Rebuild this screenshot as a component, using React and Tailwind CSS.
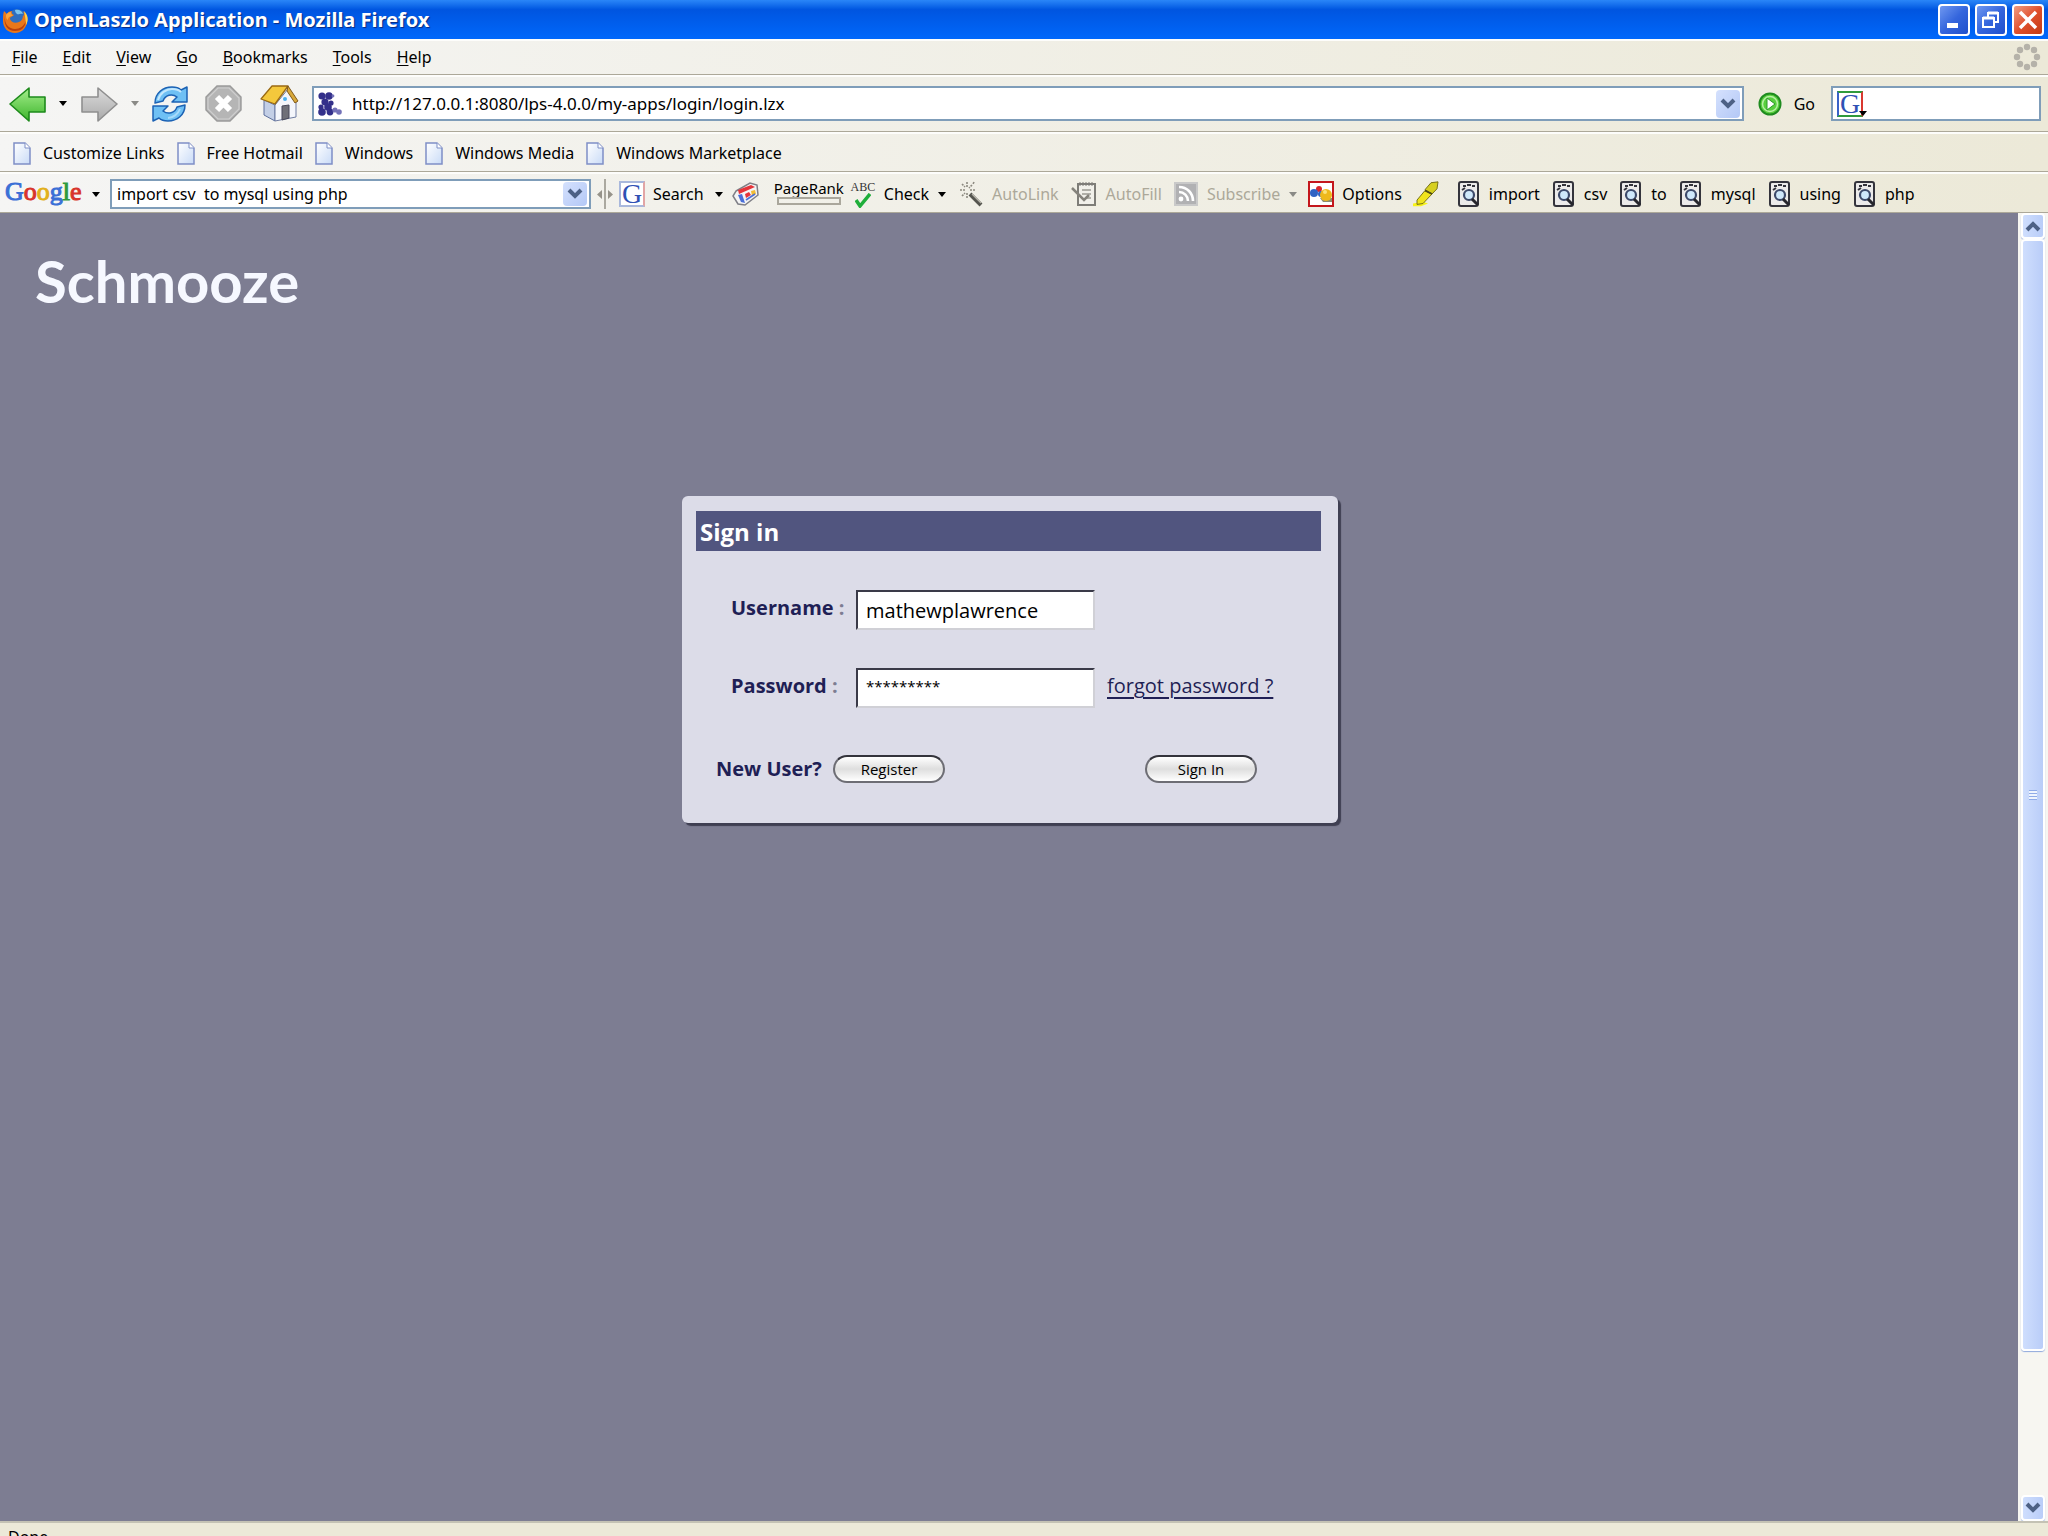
import { useState } from 'react';

const menus = ['File', 'Edit', 'View', 'Go', 'Bookmarks', 'Tools', 'Help'];
const bookmarks = ['Customize Links', 'Free Hotmail', 'Windows', 'Windows Media', 'Windows Marketplace'];
const searchWords = ['import', 'csv', 'to', 'mysql', 'using', 'php'];

const barLine = 'border-b border-[#aca899] shadow-[inset_0_2px_0_#fdfdfb]';

// Small black triangle next to drop-down buttons
const Caret = ({ className = 'text-black' }) => (
    <svg className={`w-2 h-[5px] shrink-0 ${className}`} viewBox="0 0 8 5">
        <path d="M0 0h8L4 5z" fill="currentColor" />
    </svg>
);

const Chevron = ({ up = false }) => (
    <svg className="w-4 h-3" viewBox="0 0 16 12">
        <path d={up ? 'M2 10l6-6 6 6' : 'M2 2l6 6 6-6'} fill="none" stroke="#4d6185" strokeWidth="4" />
    </svg>
);

const FirefoxIcon = () => (
    <svg className="w-7 h-7 shrink-0" viewBox="0 0 28 28">
        <circle cx="15" cy="12" r="9" fill="#2f6fc0" />
        <path d="M13 4c4-1 7 1 8 4-3-1-4 1-6 0-1-1-2-2-2-4z" fill="#7cc4ee" />
        <path d="M2 5l3 3c1-2 3-3 5-3-1 2 0 3 2 4-1 2-4 1-4 4 1 3 5 5 9 3 3-1 4-4 4-7l1 1c0-2 0-3-1-5 4 3 5 7 4 11-1 7-6 11-12 11C6 27 1 22 1 15c0-4 0-7 1-10z" fill="#e8771a" />
        <path d="M3 10c-1 8 4 13 10 13 5 0 9-3 11-8-1 7-5 10-11 10C6 25 1 19 3 10z" fill="#b8400e" />
        <path d="M22 5c4 4 5 9 2 14 0-4-1-9-2-14z" fill="#ffd04a" />
        <path d="M4 9c1-2 3-3 5-3 0 2 1 3 2 4-3 0-5 1-5 4-2-1-2-3-2-5z" fill="#f9a33b" />
    </svg>
);

const ArrowIcon = ({ forward = false }) => (
    <svg className="w-[37px] h-9 shrink-0" viewBox="0 0 37 36">
        <defs>
            <linearGradient id={forward ? 'fwd' : 'back'} x1="0" y1="0" x2="0" y2="1">
                <stop offset="0" stopColor={forward ? '#dcdcdc' : '#a5ee8c'} />
                <stop offset="1" stopColor={forward ? '#a9a9a9' : '#3db52c'} />
            </linearGradient>
        </defs>
        <path
            d={forward ? 'M36 18L17 2v9H1v15h16v9z' : 'M1 18L20 2v9h16v15H20v9z'}
            fill={forward ? 'url(#fwd)' : 'url(#back)'}
            stroke={forward ? '#8f8f8f' : '#1d8a1b'}
            strokeWidth="1.6"
            strokeLinejoin="round"
        />
    </svg>
);

const ReloadIcon = () => (
    <svg className="w-[38px] h-9 shrink-0" viewBox="0 0 38 36">
        <g fill="#6fc0f4" stroke="#1c62b4" strokeWidth="1.5" strokeLinejoin="round">
            <path d="M4 17C4 7 12 1 21 1c4 0 7 1 9 3l6-3v15H21l5-5c-5-4-12-2-14 4z" />
            <path d="M34 19c0 10-8 16-17 16-4 0-7-1-9-3l-6 3V20h15l-5 5c5 4 12 2 14-4z" />
        </g>
        <path d="M7 14c2-7 8-11 14-11 4 0 7 1 9 3" fill="none" stroke="#c3e7fd" strokeWidth="2" />
        <path d="M29 23c-2 5-7 9-12 9" fill="none" stroke="#a7dafb" strokeWidth="2" />
    </svg>
);

const StopIcon = () => (
    <svg className="w-[37px] h-[37px] shrink-0" viewBox="0 0 37 37">
        <path d="M12 1h13l11 11v13L25 36H12L1 25V12z" fill="#b5b5b5" stroke="#9a9a9a" strokeWidth="1.4" />
        <path d="M13 3h11l10 10v11L24 34H13L3 24V13z" fill="none" stroke="#cfcfcf" strokeWidth="1.2" />
        <path d="M12 12l13 13M25 12L12 25" stroke="#fff" strokeWidth="6" />
    </svg>
);

const HomeIcon = () => (
    <svg className="w-[39px] h-[37px] shrink-0" viewBox="0 0 39 37">
        <path d="M4 15l11 5v16L4 30z" fill="#c3cfe6" stroke="#5c6f9c" />
        <path d="M15 20L28 4l8 13v15l-21 4z" fill="#f4f6fb" stroke="#6f7da2" />
        <path d="M12 1h16L15 19 1 14z" fill="#f4c83c" stroke="#9a6a13" strokeWidth="1.3" strokeLinejoin="round" />
        <path d="M28 1l10 15-3 2L27 6z" fill="#d8a93a" stroke="#80591a" />
        <path d="M22 21l7-1v13l-7 2z" fill="#6f7078" stroke="#48495a" />
        <circle cx="25" cy="14" r="2" fill="#4ab0ee" />
    </svg>
);

const LaszloIcon = () => (
    <svg className="w-6 h-6 shrink-0" viewBox="0 0 24 24">
        <g fill="#33308a">
            <circle cx="4" cy="4" r="3.6" /><circle cx="11" cy="4" r="3.8" />
            <circle cx="13" cy="11" r="2.6" /><circle cx="7" cy="10" r="3.6" />
            <circle cx="3" cy="15" r="2.6" /><circle cx="10" cy="15" r="3.8" />
            <circle cx="4" cy="20" r="3.8" /><circle cx="12" cy="20" r="3.4" />
        </g>
        <g fill="#7472b8">
            <circle cx="17" cy="18" r="2.6" /><circle cx="21" cy="20" r="2.8" /><circle cx="15" cy="4" r="1.4" />
        </g>
    </svg>
);

const PageIcon = () => (
    <svg className="w-[18px] h-[23px] shrink-0" viewBox="0 0 18 23">
        <defs>
            <linearGradient id="sheet" x1="0" y1="0" x2="1" y2="1">
                <stop offset="0" stopColor="#ffffff" />
                <stop offset="1" stopColor="#c9dbf7" />
            </linearGradient>
        </defs>
        <path d="M1 1h11l5 5v16H1z" fill="url(#sheet)" stroke="#7f8fc6" strokeWidth="1.5" />
        <path d="M12 1v5h5" fill="#fff" stroke="#7f8fc6" />
    </svg>
);

const GoIcon = () => (
    <svg className="w-6 h-6 shrink-0" viewBox="0 0 24 24">
        <circle cx="12" cy="12" r="10.5" fill="#58cf3d" stroke="#1f8b1f" strokeWidth="2" />
        <circle cx="12" cy="12" r="7.5" fill="none" stroke="#b9f0a6" strokeWidth="1.5" />
        <path d="M9 6l8 6-8 6z" fill="#fff" stroke="#2b9a26" />
    </svg>
);

const SpinnerIcon = () => (
    <svg className="w-7 h-7 shrink-0" viewBox="0 0 28 28">
        <g fill="#b5b2a9">
            <circle cx="14" cy="4" r="3.2" /><circle cx="21" cy="7" r="3.2" />
            <circle cx="24" cy="14" r="3.2" /><circle cx="21" cy="21" r="3.2" />
            <circle cx="14" cy="24" r="3.2" /><circle cx="7" cy="21" r="3.2" />
            <circle cx="4" cy="14" r="3.2" /><circle cx="7" cy="7" r="3.2" />
        </g>
    </svg>
);

const GoogleG = ({ className = 'border-t-[#2f9a3c] border-l-[#3a62c8] border-b-[#2f9a3c] border-r-[#d9382f]' }) => (
    <span className={`flex w-[26px] h-[26px] shrink-0 items-center justify-center border-2 bg-white font-['Liberation_Serif',serif] text-[28px] leading-none text-[#2f51b4] ${className}`}>
        G
    </span>
);

const SplitterIcon = () => (
    <svg className="w-4 h-[30px] shrink-0" viewBox="0 0 16 30">
        <path d="M8 0v30" stroke="#8d8a80" strokeWidth="1.4" />
        <path d="M5 11v9l-5-4.500zM11 11v9l5-4.500z" fill="#96938a" />
    </svg>
);

const NewsIcon = () => (
    <svg className="w-[27px] h-6 shrink-0" viewBox="0 0 27 24">
        <path d="M4 9l14-8 7 2 1 10-13 10-7-1-5-8z" fill="#f4f4f4" stroke="#7f7f86" strokeWidth="1.5" />
        <path d="M6 8l13-5 4 2-16 7z" fill="#e5343a" />
        <path d="M6 13l4-1 3 9-4-1z" fill="#4a6fd8" />
        <path d="M13 12l4-2 2 3-5 3z" fill="#e5343a" />
        <path d="M19 9l4-1 1 4-4 2z" fill="#f2bc34" />
        <path d="M14 18l9-6" stroke="#4a6fd8" strokeWidth="1.6" />
    </svg>
);

const CheckIcon = () => (
    <span className="flex w-6 shrink-0 flex-col items-center">
        <span className="font-['Liberation_Serif',serif] text-xs leading-3 text-[#333]">ABC</span>
        <svg className="w-4 h-[15px]" viewBox="0 0 16 15">
            <path d="M1 7l4 6L15 1" fill="none" stroke="#1fae3a" strokeWidth="3.500" />
        </svg>
    </span>
);

const WandIcon = () => (
    <svg className="w-6 h-[26px] shrink-0" viewBox="0 0 24 26">
        <path d="M11 13l11 11" stroke="#55554f" strokeWidth="4" />
        <path d="M13 13l9 9" stroke="#b8b6ac" strokeWidth="1.2" />
        <path d="M8 1v5M8 12v5M1 9h5M11 9h5M3 3l3 3M13 4l-3 3M3 15l3-3M15 1l-1 2" stroke="#8d8a80" strokeWidth="1.600" strokeDasharray="2 1" />
    </svg>
);

const AutoFillIcon = () => (
    <svg className="w-[26px] h-[26px] shrink-0" viewBox="0 0 26 26">
        <path d="M7 3h17v21H7z" fill="#f1f0ea" stroke="#7e7d78" strokeWidth="2" />
        <path d="M9 1v4M12 1v4M15 1v4M18 1v4M21 1v4" stroke="#7e7d78" />
        <path d="M11 9h9M11 13h9M14 17h6" stroke="#9b9992" strokeWidth="1.5" />
        <path d="M1 7l12 12 5-5" fill="none" stroke="#85837c" strokeWidth="2.500" />
    </svg>
);

const FeedIcon = () => (
    <svg className="w-6 h-6 shrink-0" viewBox="0 0 24 24">
        <path d="M1 1h22v22H1z" fill="#b1b1b3" stroke="#c9c9c9" strokeWidth="2" />
        <circle cx="7" cy="17" r="2.400" fill="#fff" />
        <path d="M5 10c5 0 9 4 9 9M5 5c8 0 14 6 14 14" fill="none" stroke="#fff" strokeWidth="2.600" />
    </svg>
);

const OptionsIcon = () => (
    <svg className="w-[26px] h-[26px] shrink-0" viewBox="0 0 26 26">
        <path d="M1 1h24v24H1z" fill="#fff" stroke="#c4161c" strokeWidth="2" />
        <path d="M12 17h12v4h-9z" fill="#8d8c70" />
        <circle cx="11" cy="8" r="3" fill="#d8262c" />
        <circle cx="6" cy="12" r="4" fill="#2f63c4" />
        <circle cx="13" cy="13" r="3" fill="#2f63c4" />
        <circle cx="18" cy="14" r="6" fill="#eeb81c" />
        <circle cx="17" cy="11" r="2" fill="#fbe27a" />
    </svg>
);

const HighlighterIcon = () => (
    <svg className="w-[26px] h-[26px] shrink-0" viewBox="0 0 26 30" preserveAspectRatio="none">
        <path d="M0 26l10-2 5 2-7 3H0z" fill="#f7f21a" />
        <path d="M4 22l8-11 7 4-9 11-6 1z" fill="#f0e41c" stroke="#6f6a12" />
        <path d="M12 10l6-8 7-1-1 8-5 6z" fill="#d6cf20" stroke="#6f6a12" />
        <path d="M12 11l7 4" stroke="#4d4a15" strokeWidth="2" />
    </svg>
);

const FindIcon = () => (
    <svg className="w-[22px] h-[26px] shrink-0" viewBox="0 0 22 26">
        <rect x="1" y="1" width="19" height="24" rx="2" fill="#ecebea" stroke="#34343c" strokeWidth="2" />
        <path d="M5 5h3M9 4h4M14 5h3M4 9l3-2" stroke="#34343c" strokeWidth="2" />
        <circle cx="11" cy="14" r="5" fill="#cfe8fb" stroke="#3d4a6b" strokeWidth="2.200" />
        <path d="M14 18l6 6" stroke="#26262c" strokeWidth="3" />
    </svg>
);

// Blue drop-down button at the end of an XP combo box
const ComboButton = ({ label, className = '' }) => (
    <button
        type="button"
        aria-label={label}
        className={`flex w-6 shrink-0 items-center justify-center rounded-sm bg-linear-to-br from-[#d5e1fd] to-[#b3c8f6] ${className}`}
    >
        <Chevron />
    </button>
);

const WindowButton = ({ label, red = false, children }) => (
    <button
        type="button"
        aria-label={label}
        className={`flex h-8 w-8 items-center justify-center rounded border-2 border-white ${red
            ? 'bg-linear-to-br from-[#ee9a80] via-[#e0502c] to-[#c23a12]'
            : 'bg-linear-to-br from-[#6f97f0] via-[#3566dd] to-[#2050cc]'
            }`}
    >
        <svg className="w-5 h-5" viewBox="0 0 20 20" fill="none" stroke="#fff">{children}</svg>
    </button>
);

const TitleBar = () => (
    <header className="flex h-[39px] shrink-0 items-center bg-linear-to-b from-[#2a86f8] via-[#0055e0] via-25% to-[#0068fb] pl-[2px] pr-1">
        <FirefoxIcon />
        <h1 className="ml-1 grow text-xl font-bold text-white [text-shadow:1px_1px_1px_#0a2a80]">
            OpenLaszlo Application - Mozilla Firefox
        </h1>
        <div className="flex gap-[5px]">
            <WindowButton label="Minimize"><path d="M3 15.500h11" strokeWidth="5" /></WindowButton>
            <WindowButton label="Restore">
                <path d="M2 8h11v9H2zM7 7V3h10v9h-4" strokeWidth="2" />
                <path d="M2 8h11M7 3h10" strokeWidth="3" />
            </WindowButton>
            <WindowButton label="Close" red><path d="M2 2l16 16M18 2L2 18" strokeWidth="3.500" /></WindowButton>
        </div>
    </header>
);

const MenuBar = () => (
    <nav className={`flex h-9 shrink-0 items-center justify-between pl-3 pr-[7px] ${barLine}`}>
        <div className="flex gap-[25px]">
            {menus.map((name) => (
                <button key={name} type="button">
                    <span className="underline underline-offset-2">{name[0]}</span>{name.slice(1)}
                </button>
            ))}
        </div>
        <SpinnerIcon />
    </nav>
);

const NavBar = () => {
    const [url, setUrl] = useState('http://127.0.0.1:8080/lps-4.0.0/my-apps/login/login.lzx');

    return (
        <div className={`flex h-[57px] shrink-0 items-center pl-[9px] pr-[7px] pt-px ${barLine}`}>
            <button type="button" aria-label="Back" className="flex items-center gap-[13px]">
                <ArrowIcon /><Caret />
            </button>
            <button type="button" aria-label="Forward" className="ml-[14px] flex items-center gap-[13px]">
                <ArrowIcon forward /><Caret className="text-[#8a8a86]" />
            </button>
            <button type="button" aria-label="Reload" className="ml-3"><ReloadIcon /></button>
            <button type="button" aria-label="Stop" className="ml-4"><StopIcon /></button>
            <button type="button" aria-label="Home" className="ml-[18px]"><HomeIcon /></button>
            <div className="ml-[13px] flex h-[35px] grow items-center border-2 border-[#7f9db9] bg-white pl-1 pr-[2px]">
                <LaszloIcon />
                <input
                    aria-label="Address"
                    className="ml-[10px] min-w-0 grow bg-transparent text-[17px] outline-none"
                    value={url}
                    onChange={(e) => setUrl(e.target.value)}
                />
                <ComboButton label="Show history" className="h-7" />
            </div>
            <button type="button" className="ml-[14px] flex items-center gap-3">
                <GoIcon />Go
            </button>
            <div className="ml-4 flex h-[35px] w-[210px] items-center border-2 border-[#7f9db9] bg-white pl-1">
                <GoogleG />
                <Caret className="-ml-1 mt-5 text-black" />
                <input aria-label="Web search" className="min-w-0 grow bg-transparent outline-none" />
            </div>
        </div>
    );
};

const BookmarksBar = () => (
    <nav className={`flex h-10 shrink-0 items-center gap-3 pl-[13px] pt-[3px] ${barLine}`}>
        {bookmarks.map((name) => (
            <a key={name} href="#" className="flex items-center gap-3">
                <PageIcon />{name}
            </a>
        ))}
    </nav>
);

const GoogleBar = () => {
    const [query, setQuery] = useState('import csv  to mysql using php');

    return (
        <div className={`flex h-[41px] shrink-0 items-center whitespace-nowrap pl-[5px] pt-1 ${barLine}`}>
            <button type="button" className="flex w-[95px] items-center justify-between">
                <span className="pb-1 font-['Liberation_Serif',serif] text-[26px] leading-7 [-webkit-text-stroke:1px]">
                    <span className="text-[#3b6fd6]">G</span>
                    <span className="text-[#d8342c]">o</span>
                    <span className="text-[#e2b01c]">o</span>
                    <span className="text-[#3b6fd6]">g</span>
                    <span className="text-[#2f9a3c]">l</span>
                    <span className="text-[#d8342c]">e</span>
                </span>
                <Caret />
            </button>
            <div className="ml-[10px] flex h-[30px] w-[481px] items-center border-2 border-[#7f9db9] bg-white pl-[5px] pr-[2px]">
                <input
                    aria-label="Google search"
                    className="min-w-0 grow bg-transparent outline-none"
                    value={query}
                    onChange={(e) => setQuery(e.target.value)}
                />
                <ComboButton label="Search history" className="h-6" />
            </div>
            <div className="ml-[6px] flex items-center gap-[6px]">
                <SplitterIcon />
                <button type="button" className="flex items-center gap-2">
                    <GoogleG className="border-[#a9b8dc] border-r-[#e2a5a5]" />
                    Search<Caret className="ml-[3px] text-black" />
                </button>
            </div>
            <button type="button" aria-label="News" className="ml-[9px]"><NewsIcon /></button>
            <div className="ml-[15px] flex flex-col items-center pb-[5px]">
                <span className="text-[15px] leading-[18px]">PageRank</span>
                <span className="h-2 w-16 border-2 border-[#aaa79c]" />
            </div>
            <button type="button" className="ml-[7px] flex items-center gap-[9px]">
                <CheckIcon />Check<Caret />
            </button>
            <div className="ml-[13px] flex items-center gap-3 text-[#aca899]">
                <button type="button" className="flex items-center gap-[9px]"><WandIcon />AutoLink</button>
                <button type="button" className="flex items-center gap-[9px]"><AutoFillIcon />AutoFill</button>
                <button type="button" className="flex items-center gap-[9px]">
                    <FeedIcon />Subscribe<Caret className="text-[#8a8a86]" />
                </button>
            </div>
            <button type="button" className="ml-[11px] flex items-center gap-2"><OptionsIcon />Options</button>
            <button type="button" aria-label="Highlight" className="ml-[11px]"><HighlighterIcon /></button>
            <div className="ml-[19px] flex items-center gap-[13px]">
                {searchWords.map((word) => (
                    <button key={word} type="button" className="flex items-center gap-[9px]">
                        <FindIcon />{word}
                    </button>
                ))}
            </div>
        </div>
    );
};

const fieldClass = 'h-10 w-[239px] border-2 border-t-[#3a3a48] border-l-[#3a3a48] border-r-[#d0d0d6] border-b-[#d0d0d6] bg-white px-2 text-black outline-none';
const labelClass = 'w-[125px] pb-1 text-xl font-bold';
const pillClass = 'h-7 w-28 rounded-full border-2 border-[#6d6d74] border-t-[#33333b] bg-linear-to-b from-white via-[#dedede] to-white text-[15px] leading-none text-black';

const SignInCard = () => {
    const [username, setUsername] = useState('mathewplawrence');
    const [password, setPassword] = useState('*********');

    return (
        <form
            onSubmit={(e) => e.preventDefault()}
            className="w-[656px] rounded-md bg-[#dcdce8] px-[14px] pt-[15px] pb-10 text-[#1f1f55] shadow-[3px_3px_1px_#3f3f52]"
        >
            <h3 className="mr-[3px] h-10 bg-[#51557f] pl-1 pt-px text-2xl leading-10 font-bold text-white">Sign in</h3>
            <div className="mt-[39px] flex items-center pl-[35px]">
                <label htmlFor="username" className={labelClass}>
                    Username <span className="text-[#7d7d92]">:</span>
                </label>
                <input id="username" className={`text-xl ${fieldClass}`} value={username} onChange={(e) => setUsername(e.target.value)} />
            </div>
            <div className="mt-[38px] flex items-center pl-[35px]">
                <label htmlFor="password" className={labelClass}>
                    Password <span className="text-[#7d7d92]">:</span>
                </label>
                <input id="password" className={`pb-1 text-[15px] ${fieldClass}`} value={password} onChange={(e) => setPassword(e.target.value)} />
                <a href="#" className="ml-3 pb-1 text-xl underline underline-offset-4">forgot password ?</a>
            </div>
            <div className="mt-[47px] flex items-center pl-5 pr-[67px]">
                <span className="w-[117px] text-xl font-bold">New User?</span>
                <button type="button" className={pillClass}>Register</button>
                <button type="submit" className={`ml-auto ${pillClass}`}>Sign In</button>
            </div>
        </form>
    );
};

const scrollPart = 'flex w-full items-center justify-center rounded-sm border-2 border-white bg-linear-to-r from-[#cfdefd] to-[#b9cdf8] shadow-[0_1px_1px_#8fa9dc]';

const ScrollBar = () => (
    <div className="flex w-[30px] shrink-0 flex-col bg-[#f7f6f1] px-[3px]">
        <button type="button" aria-label="Scroll up" className={`h-[26px] ${scrollPart}`}><Chevron up /></button>
        <div className="grow basis-0">
            <div className={`h-[88.5%] ${scrollPart}`}>
                <span className="h-[10px] w-2 bg-[repeating-linear-gradient(#8fabe8_0_1px,#eef4fe_1px_3px)]" />
            </div>
        </div>
        <button type="button" aria-label="Scroll down" className={`h-[26px] ${scrollPart}`}><Chevron /></button>
    </div>
);

export default function App() {
    return (
        <div className="flex h-screen flex-col overflow-hidden bg-linear-to-r from-[#f5f5f4] to-[#ece9d8] font-['Noto_Sans',sans-serif] text-base leading-6 text-black">
            <TitleBar />
            <MenuBar />
            <NavBar />
            <BookmarksBar />
            <GoogleBar />
            <div className="flex min-h-0 grow">
                <main className="flex grow flex-col items-center bg-[#7d7d92] pl-[2px] font-['Open_Sans',sans-serif]">
                    <h2 className="h-[283px] self-stretch pl-[33px] pt-[34px] font-['Lato',sans-serif] text-[58px] leading-[68px] font-bold text-[#f6f8ff]">
                        Schmooze
                    </h2>
                    <SignInCard />
                </main>
                <ScrollBar />
            </div>
            <footer className="h-[15px] shrink-0 border-t-2 border-[#c4c2b4] bg-[#ece9d8] pl-2 pt-[2px]">Done</footer>
        </div>
    );
}
